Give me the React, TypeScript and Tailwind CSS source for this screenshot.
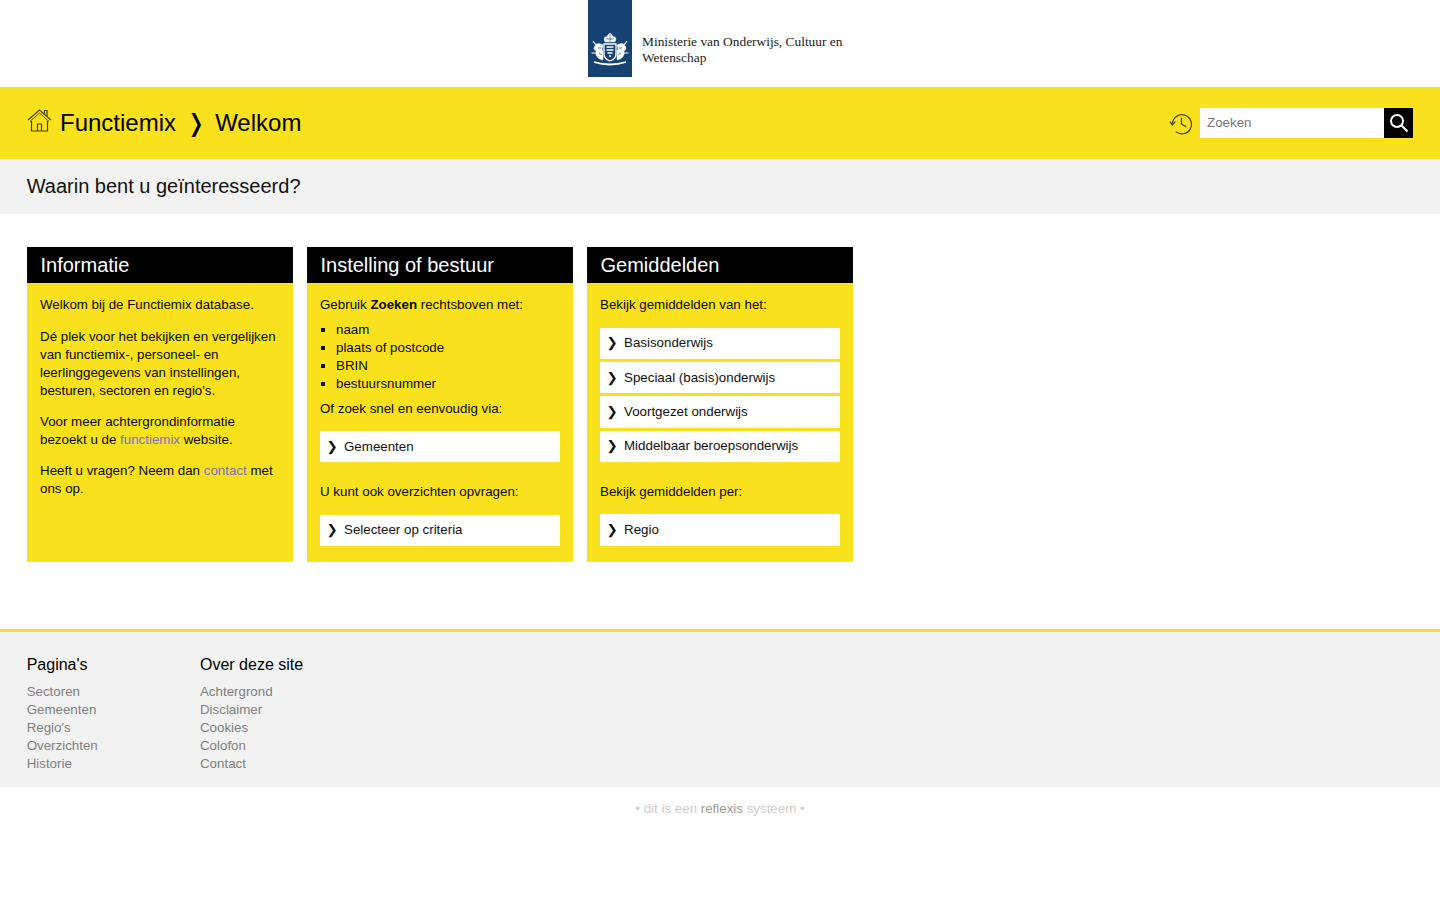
const Chevron = () => <span className="w-[17.5px] shrink-0 font-['DejaVu_Sans',sans-serif] text-[13.33px]">❯</span>;

function LinkRow({ label, className = "" }: { label: string; className?: string }) {
  return (
    <div className={`flex items-center bg-white pl-[6.5px] text-[13.33px] text-[#111] ${className}`}>
      <Chevron />
      <span>{label}</span>
    </div>
  );
}

function Card({ title, children }: { title: string; children: React.ReactNode }) {
  return (
    <section className="flex w-[266px] flex-col bg-[#f9e11e]">
      <h2 className="flex h-9 items-center bg-black pl-[13.5px] text-[20px] text-white">{title}</h2>
      <div className="flex-1 px-[13px] pb-4 pt-[13px] text-[13.33px] leading-[18px] text-[#0a0a0a]">{children}</div>
    </section>
  );
}

function Logo() {
  return (
    <div className="flex h-[87px] justify-center pr-2">
      <div className="flex h-[77px] w-[256px] items-start">
        <div className="flex h-[77px] w-11 items-end justify-center bg-[#154273] pb-[10px]">
          {/* coat of arms */}
          <svg width="38" height="35" viewBox="0 0 38 35" fill="none" stroke="white">
            <path d="M14 10 C12 6 14 4 16 5 C16 3 18 2 19 1 C20 2 22 3 22 5 C24 4 26 6 24 10 Z" fill="white" strokeWidth="0.4" />
            <path d="M15 7 H23 M19 2 V10" stroke="#154273" strokeWidth="0.6" />
            <path d="M13 12 H25 V22 Q25 27 19 29 Q13 27 13 22 Z" fill="#154273" strokeWidth="1.3" />
            <path d="M15.5 15 L22.5 15 M15.5 18 H22.5 M16.5 21 H21.5 M18 24 H20" strokeWidth="1.3" />
            <path d="M12 28 C7 27 4 24 5 19 C3 18 2 16 4 14 C5 11 8 11 10 12 L12 13 L11 17 L12 19 Z" fill="white" strokeWidth="0.4" />
            <path d="M26 28 C31 27 34 24 33 19 C35 18 36 16 34 14 C33 11 30 11 28 12 L26 13 L27 17 L26 19 Z" fill="white" strokeWidth="0.4" />
            <path d="M5 13 L2 9 M33 13 L36 9" strokeWidth="1.2" />
            <path d="M0.5 21 H5 M33 21 H37.5" strokeWidth="1.2" />
            <path d="M7 16 H10 M28 16 H31 M8 21 L11 23 M30 21 L27 23" stroke="#154273" strokeWidth="0.7" />
            <path d="M3 30 Q19 35 35 30" strokeWidth="1.8" />
          </svg>
        </div>
        <div className="ml-[10px] mt-[34px] whitespace-nowrap font-['Liberation_Serif',serif] text-[13.4px] leading-4 text-[#222]">
          Ministerie van Onderwijs, Cultuur en
          <br />
          Wetenschap
        </div>
      </div>
    </div>
  );
}

export default function App() {
  return (
    <div className="min-h-[900px] bg-white font-['Liberation_Sans',Arial,sans-serif]">
      <Logo />

      <header className="flex h-[72px] items-center justify-between bg-[#f9e11e] px-[27px]">
        <div className="flex items-center text-[24px] text-black">
          <svg width="25" height="24" viewBox="0 0 25 24" fill="none" stroke="#4b4308" strokeWidth="1.2" className="-mt-[6px] mr-2">
            <path d="M1 12 L12.5 2 L24 12" />
            <path d="M3 13.5 L12.5 5 L22 13.5" strokeWidth="0.9" />
            <path d="M4.5 13 V23 H20.5 V13" />
            <path d="M10.5 23 V16 H14.5 V23" />
            <path d="M17.5 5.5 V2.5 H20 V8" />
          </svg>
          <span>Functiemix</span>
          <span className="ml-[10px] mr-[9px] font-['DejaVu_Sans',sans-serif]">❭</span>
          <span>Welkom</span>
        </div>
        <div className="flex items-center">
          <svg width="23" height="23" viewBox="0 0 24 24" fill="none" stroke="#4b4308" strokeWidth="1.3" className="mr-[8px] mt-[1px]">
            <path d="M3.5 12 A10 10 0 1 1 7 20.5" />
            <path d="M1 10 L3.5 13.5 L6.5 10" />
            <path d="M13 6 V12.5 L18 15.5" />
          </svg>
          <div className="flex h-[30px] w-[184px] items-center bg-white pl-[7px] text-[13.33px] text-[#777]">Zoeken</div>
          <div className="flex h-[30px] w-[29px] items-center justify-center bg-black">
            <svg width="20" height="20" viewBox="0 0 20 20" fill="none" stroke="white" strokeWidth="2">
              <circle cx="8" cy="8" r="6" />
              <path d="M12.5 12.5 L18.5 18.5" />
            </svg>
          </div>
        </div>
      </header>

      <div className="flex h-[55px] items-center bg-[#f2f2f2] px-[26.67px] pb-px text-[20px] text-[#111]">
        Waarin bent u geïnteresseerd?
      </div>

      <main className="flex gap-[14px] px-[27px] pt-[33px]">
        <Card title="Informatie">
          <p>Welkom bij de Functiemix database.</p>
          <p className="mt-[14px]">
            Dé plek voor het bekijken en vergelijken van functiemix-, personeel- en leerlinggegevens van instellingen,
            besturen, sectoren en regio's.
          </p>
          <p className="mt-[13px]">
            Voor meer achtergrondinformatie bezoekt u de <span className="text-[#7c6fd0]">functiemix</span> website.
          </p>
          <p className="mt-[13px]">
            Heeft u vragen? Neem dan <span className="text-[#7c6fd0]">contact</span> met ons op.
          </p>
        </Card>
        <Card title="Instelling of bestuur">
          <p>
            Gebruik <b>Zoeken</b> rechtsboven met:
          </p>
          <ul className="mt-[7px] list-[square] pl-4">
            <li>naam</li>
            <li>plaats of postcode</li>
            <li>BRIN</li>
            <li>bestuursnummer</li>
          </ul>
          <p className="mt-[7px]">Of zoek snel en eenvoudig via:</p>
          <LinkRow label="Gemeenten" className="mt-[13px] h-[31px]" />
          <p className="mt-[21px]">U kunt ook overzichten opvragen:</p>
          <LinkRow label="Selecteer op criteria" className="mt-[14px] h-[31px] pb-[2px]" />
        </Card>
        <Card title="Gemiddelden">
          <p>Bekijk gemiddelden van het:</p>
          <div className="mt-[14px] flex flex-col gap-[3px]">
            <LinkRow label="Basisonderwijs" className="h-[31px] pb-[2px]" />
            <LinkRow label="Speciaal (basis)onderwijs" className="h-[31px]" />
            <LinkRow label="Voortgezet onderwijs" className="h-8" />
            <LinkRow label="Middelbaar beroepsonderwijs" className="h-[31px] pb-px" />
          </div>
          <p className="mt-[21px]">Bekijk gemiddelden per:</p>
          <LinkRow label="Regio" className="mt-[13px] h-8" />
        </Card>
      </main>

      <footer className="mt-[67px] h-[158px] border-t-[3px] border-[#f9e11e] bg-[#f2f2f2] px-[26.67px] pt-[23px]">
        <div className="flex">
          <div className="w-[173.33px]">
            <h3 className="text-[16px] leading-[20px] text-black">Pagina's</h3>
            <ul className="mt-2 text-[13.33px] leading-[18px] text-[#808080]">
              <li>Sectoren</li>
              <li>Gemeenten</li>
              <li>Regio's</li>
              <li>Overzichten</li>
              <li>Historie</li>
            </ul>
          </div>
          <div>
            <h3 className="text-[16px] leading-[20px] text-black">Over deze site</h3>
            <ul className="mt-2 text-[13.33px] leading-[18px] text-[#808080]">
              <li>Achtergrond</li>
              <li>Disclaimer</li>
              <li>Cookies</li>
              <li>Colofon</li>
              <li>Contact</li>
            </ul>
          </div>
        </div>
      </footer>

      <div className="pt-[13px] text-center text-[13.33px] leading-[18px] text-[#cccccc]">
        • dit is een <span className="text-[#999]">reflexis</span> systeem •
      </div>
    </div>
  );
}
